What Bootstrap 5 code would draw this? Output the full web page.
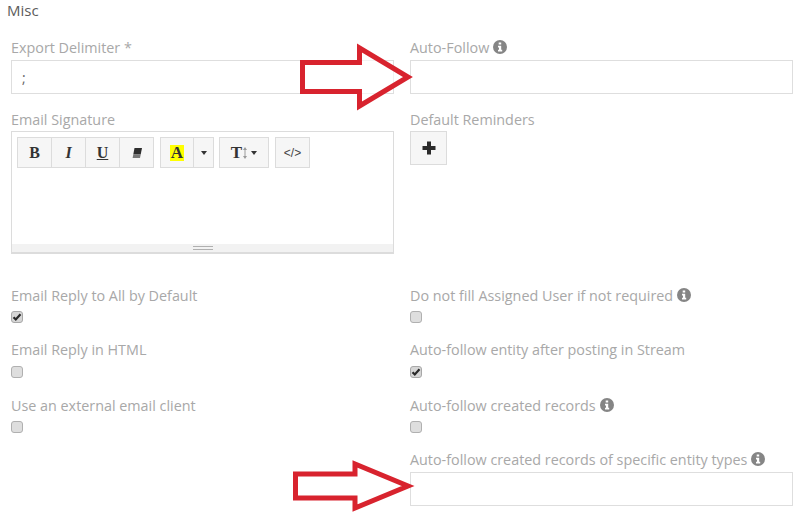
<!DOCTYPE html>
<html lang="en">
<head>
<meta charset="utf-8">
<title>Misc</title>
<link rel="stylesheet" href="https://cdn.jsdelivr.net/npm/bootstrap@5.3.0/dist/css/bootstrap.min.css">
<style>
html,body{margin:0;background:#fff;overflow:hidden}
body{font-family:"Open Sans",sans-serif;font-size:14.35px}
.sheet{position:relative;width:800px;height:514px;overflow:hidden;padding:0 7px 0 11px}
.sheet-title{margin:0 0 18px -4px;font-size:15px;line-height:20px;font-weight:400;color:#5c5c5c}
.grid-row{--bs-gutter-x:16px;--bs-gutter-y:0}
.fld-label{display:flex;align-items:center;gap:4px;height:20px;margin:0 0 2px;font-size:14.35px;line-height:20px;color:#a8a8a8;white-space:nowrap}
.fld-input.form-control{display:block;height:34px;padding:0 10px;border:1px solid #dedede;border-radius:0;font-size:14px;line-height:32px;color:#666;box-shadow:none}
.block-one{margin-bottom:16px}
.editor{height:123px;margin-top:-1px;border:1px solid #dcdcdc;border-bottom-width:2px;display:flex;flex-direction:column;justify-content:space-between}
.ed-bar{display:flex;gap:6px;padding:5px 0 0 5px}
.ed-bar .btn-group .btn, .ed-bar > .btn{height:31px;padding:0;border:1px solid #dcdcdc;border-radius:0;background:#f6f6f6;color:#333;display:flex;align-items:center;justify-content:center;font-size:14px;line-height:1;box-shadow:none;font-family:"Liberation Serif",serif}
.ed-bar .btn-group .btn + .btn{margin-left:-1px}
.w-fmt{width:35px}
.w-color{width:34px}
.w-caret{width:21px}
.group-tight{margin-right:-1px}
.w-size{width:50px}
.w-code{width:35px}
.b-bold{font-weight:700;font-size:16px}
.b-ital{font-weight:700;font-style:italic;font-size:16px}
.b-under{font-weight:700;text-decoration:underline;font-size:16px}
.b-hl{font-weight:700;font-size:17px;background:#ff0;padding:0 1px;line-height:16px;display:block;color:#333}
.b-t{font-weight:700;font-size:17px;margin-right:1px}
.b-code{font-family:"Liberation Sans",sans-serif;font-size:12px;color:#444}
.ed-foot{height:8px;background:#f2f2f2;display:flex;align-items:center;justify-content:center}
.ed-grip{display:block;width:20px;height:4px;border-top:1px solid #b0b0b0;border-bottom:1px solid #b0b0b0}
.add-btn.btn{width:37px;height:34px;margin-top:-1px;padding:0;border:1px solid #dcdcdc;border-radius:0;background:#f6f6f6;display:flex;align-items:center;justify-content:center}
.block-check{height:55px}
.first-check{margin-top:32px}
.block-check .fld-label{margin-bottom:5px}
.nudge-up .fld-label{margin-top:-1px;margin-bottom:6px}
.chk.form-check-input{display:block;width:12px;height:12px;margin:1px 0 0;border:1px solid #b0b0b0;border-radius:3px;background-color:#dedede;box-shadow:none}
.chk.form-check-input:checked{background-color:#d6d6d6;border-color:#a8a8a8;background-size:10px 10px;background-image:url("data:image/svg+xml,%3Csvg xmlns='http://www.w3.org/2000/svg' viewBox='0 0 10 10'%3E%3Cpath d='M1.500 5.200l2.300 2.300L8.500 2.300' fill='none' stroke='%232a2a2a' stroke-width='2.200'/%3E%3C/svg%3E")}
.block-last .fld-label{margin-bottom:2px;margin-top:-1px}
.tip{flex:none;display:block;margin-top:-2px}
.pointer{position:absolute;display:block}
.ptr-a{left:295px;top:38px}
.ptr-b{left:288px;top:454px}
</style>
</head>
<body>
<div class="sheet">
  <h4 class="sheet-title">Misc</h4>

  <div class="row grid-row">
    <div class="col-6">
      <div class="block-one">
        <label class="fld-label">Export Delimiter *</label>
        <input class="form-control fld-input" type="text" value=";">
      </div>
      <label class="fld-label">Email Signature</label>
      <div class="editor">
        <div class="ed-bar">
          <div class="btn-group">
            <span class="btn w-fmt"><span class="b-bold">B</span></span>
            <span class="btn w-fmt"><span class="b-ital">I</span></span>
            <span class="btn w-fmt"><span class="b-under">U</span></span>
            <span class="btn w-fmt">
              <svg width="10" height="10" viewBox="0 0 10 10"><path d="M2.500 0H10L8.700 6.500H1.300z" fill="#2e2e2e"/><path d="M1.300 6.500h7.400L8 10H0.600z" fill="#777"/></svg>
            </span>
          </div>
          <div class="btn-group group-tight">
            <span class="btn w-color"><span class="b-hl">A</span></span>
            <span class="btn w-caret"><svg width="6" height="4" viewBox="0 0 6 4"><path d="M0 0h6L3 4z" fill="#333"/></svg></span>
          </div>
          <span class="btn w-size"><span class="b-t">T</span><svg width="4" height="12" viewBox="0 0 4 12"><path d="M2 0L4 3H2.500v6H4L2 12 0 9h1.500V3H0z" fill="#999"/></svg><svg class="ms-1" width="6" height="4" viewBox="0 0 6 4"><path d="M0 0h6L3 4z" fill="#333"/></svg></span>
          <span class="btn w-code"><span class="b-code">&lt;/&gt;</span></span>
        </div>
        <div class="ed-foot"><span class="ed-grip"></span></div>
      </div>
    </div>
    <div class="col-6">
      <div class="block-one">
        <label class="fld-label">Auto-Follow
          <svg class="tip" width="14" height="14" viewBox="0 0 14 14"><circle cx="7" cy="7" r="7" fill="#858585"/><path d="M5.700 2.500h2.500v2H5.700zM5 5.800h3.200v4H9.200v1.700H5V9.800h1V7.500H5z" fill="#fff"/></svg>
        </label>
        <input class="form-control fld-input" type="text">
      </div>
      <label class="fld-label">Default Reminders</label>
      <button class="btn add-btn" type="button" aria-label="Add">
        <svg width="14" height="14" viewBox="0 0 14 14"><path d="M5 0.500h4v4.500h4.500v4H9v4.500H5V9H0.500V5H5z" fill="#2b2b2b"/></svg>
      </button>
    </div>
  </div>

  <div class="row grid-row first-check">
    <div class="col-6 block-check">
      <label class="fld-label">Email Reply to All by Default</label>
      <input class="form-check-input chk" type="checkbox" checked>
    </div>
    <div class="col-6 block-check">
      <label class="fld-label">Do not fill Assigned User if not required
        <svg class="tip" width="14" height="14" viewBox="0 0 14 14"><circle cx="7" cy="7" r="7" fill="#858585"/><path d="M5.700 2.500h2.500v2H5.700zM5 5.800h3.200v4H9.200v1.700H5V9.800h1V7.500H5z" fill="#fff"/></svg>
      </label>
      <input class="form-check-input chk" type="checkbox">
    </div>
  </div>
  <div class="row grid-row nudge-up">
    <div class="col-6 block-check">
      <label class="fld-label">Email Reply in HTML</label>
      <input class="form-check-input chk" type="checkbox">
    </div>
    <div class="col-6 block-check">
      <label class="fld-label">Auto-follow entity after posting in Stream</label>
      <input class="form-check-input chk" type="checkbox" checked>
    </div>
  </div>
  <div class="row grid-row">
    <div class="col-6 block-check">
      <label class="fld-label">Use an external email client</label>
      <input class="form-check-input chk" type="checkbox">
    </div>
    <div class="col-6 block-check">
      <label class="fld-label">Auto-follow created records
        <svg class="tip" width="14" height="14" viewBox="0 0 14 14"><circle cx="7" cy="7" r="7" fill="#858585"/><path d="M5.700 2.500h2.500v2H5.700zM5 5.800h3.200v4H9.200v1.700H5V9.800h1V7.500H5z" fill="#fff"/></svg>
      </label>
      <input class="form-check-input chk" type="checkbox">
    </div>
  </div>
  <div class="row grid-row">
    <div class="col-6"></div>
    <div class="col-6 block-last">
      <label class="fld-label">Auto-follow created records of specific entity types
        <svg class="tip" width="14" height="14" viewBox="0 0 14 14"><circle cx="7" cy="7" r="7" fill="#858585"/><path d="M5.700 2.500h2.500v2H5.700zM5 5.800h3.200v4H9.200v1.700H5V9.800h1V7.500H5z" fill="#fff"/></svg>
      </label>
      <input class="form-control fld-input" type="text">
    </div>
  </div>

  <svg class="pointer ptr-a" width="122" height="76" viewBox="295 38 122 76" aria-hidden="true"><path d="M302.500 62.500H359.500V48L408 77L359.500 106V91.500H302.500z" fill="#fff" fill-opacity=".6" stroke="#d8232e" stroke-width="5" stroke-linejoin="miter"/></svg>
  <svg class="pointer ptr-b" width="128" height="60" viewBox="288 454 128 60" aria-hidden="true"><path d="M295.500 474H355V464L408 486L355 508V498H295.500z" fill="#fff" fill-opacity=".6" stroke="#d8232e" stroke-width="5" stroke-linejoin="miter"/></svg>
</div>
<script src="https://cdn.jsdelivr.net/npm/bootstrap@5.3.0/dist/js/bootstrap.bundle.min.js"></script>
</body>
</html>
